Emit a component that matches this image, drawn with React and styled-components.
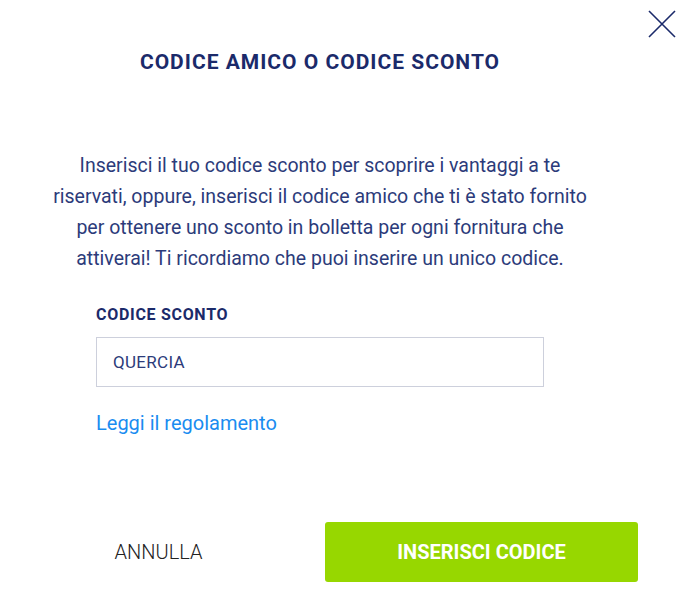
import React from "react";
import styled, { createGlobalStyle } from "styled-components";

const Global = createGlobalStyle`
  html, body { margin: 0; padding: 0; background: #fff; }
  body { font-family: Roboto, "Liberation Sans", sans-serif; }
  * { box-sizing: border-box; }
`;

const Modal = styled.div`
  position: relative;
  width: 690px;
  height: 596px;
  background: #fff;
`;

const Close = styled.button`
  position: absolute;
  top: 10px;
  right: 14px;
  width: 28px;
  height: 28px;
  padding: 0;
  border: none;
  background: transparent;
  cursor: pointer;
  display: flex;
  align-items: center;
  justify-content: center;
`;

const Column = styled.div`
  width: 640px;
  display: flex;
  flex-direction: column;
  align-items: center;
`;

const Title = styled.h2`
  margin: 48px 0 0;
  font-size: 21px;
  line-height: 28px;
  font-weight: 700;
  color: #1b2a6a;
  letter-spacing: 1px;
`;

const Intro = styled.p`
  margin: 74px 0 0;
  width: 600px;
  text-align: center;
  font-size: 19.5px;
  line-height: 31px;
  color: #2c3b7a;
  font-weight: 400;
`;

const Field = styled.div`
  margin-top: 31px;
  width: 448px;
  display: flex;
  flex-direction: column;
`;

const Label = styled.label`
  font-size: 16px;
  font-weight: 700;
  color: #1b2a6a;
  line-height: 20px;
  letter-spacing: 0.7px;
`;

const Input = styled.div`
  margin-top: 12px;
  height: 50px;
  border: 1px solid #cdd0dc;
  padding: 0 16px;
  display: flex;
  align-items: center;
  font-size: 17px;
  color: #2c3b7a;
  letter-spacing: 0.3px;
`;

const Link = styled.a`
  margin-top: 24px;
  font-size: 20px;
  color: #1a8cf0;
  text-decoration: none;
  line-height: 24px;
`;

const Footer = styled.div`
  margin-top: 87px;
  width: 640px;
  display: grid;
  grid-template-columns: 1fr 1fr;
  gap: 10px;
  padding: 0 2px;
`;

const Button = styled.button`
  height: 60px;
  border: none;
  border-radius: 3px;
  font-family: inherit;
  font-size: 20px;
  cursor: pointer;
  background: ${(p) => (p.$primary ? "#97d700" : "transparent")};
  color: ${(p) => (p.$primary ? "#fff" : "#222")};
  font-weight: ${(p) => (p.$primary ? 700 : 300)};
`;

export default function App() {
  return (
    <>
      <Global />
      <Modal>
        <Close aria-label="Chiudi">
          <svg width="28" height="28" viewBox="0 0 28 28">
            <path d="M1 1 L27 27 M27 1 L1 27" stroke="#1b2a6a" strokeWidth="1.6" fill="none" />
          </svg>
        </Close>
        <Column>
          <Title>CODICE AMICO O CODICE SCONTO</Title>
          <Intro>
            Inserisci il tuo codice sconto per scoprire i vantaggi a te
            <br />
            riservati, oppure, inserisci il codice amico che ti è stato fornito
            <br />
            per ottenere uno sconto in bolletta per ogni fornitura che
            <br />
            attiverai! Ti ricordiamo che puoi inserire un unico codice.
          </Intro>
          <Field>
            <Label>CODICE SCONTO</Label>
            <Input>QUERCIA</Input>
            <Link href="#">Leggi il regolamento</Link>
          </Field>
          <Footer>
            <Button>ANNULLA</Button>
            <Button $primary>INSERISCI CODICE</Button>
          </Footer>
        </Column>
      </Modal>
    </>
  );
}
